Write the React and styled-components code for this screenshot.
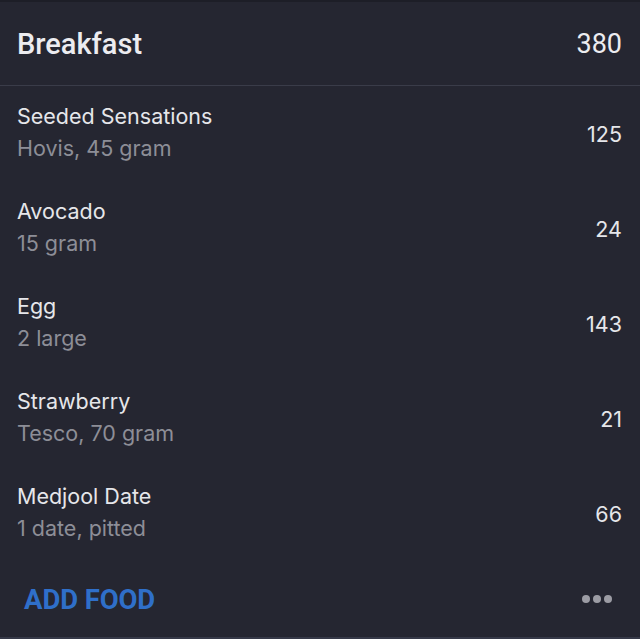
import styled, { createGlobalStyle } from 'styled-components';

const GlobalStyle = createGlobalStyle`
  html, body {
    margin: 0;
    padding: 0;
    background: #252631;
  }
`;

const items = [
  { name: 'Seeded Sensations', detail: 'Hovis, 45 gram', kcal: 125 },
  { name: 'Avocado', detail: '15 gram', kcal: 24 },
  { name: 'Egg', detail: '2 large', kcal: 143 },
  { name: 'Strawberry', detail: 'Tesco, 70 gram', kcal: 21 },
  { name: 'Medjool Date', detail: '1 date, pitted', kcal: 66 },
];

export default function App() {
  return (
    <>
      <GlobalStyle />
      <SCard>
        <SHeader>
          <STitle>Breakfast</STitle>
          <STotal>380</STotal>
        </SHeader>
        <SList>
          {items.map((item) => (
            <SRow key={item.name}>
              <SInfo>
                <SName>{item.name}</SName>
                <SDetail>{item.detail}</SDetail>
              </SInfo>
              <SKcal>{item.kcal}</SKcal>
            </SRow>
          ))}
        </SList>
        <SFooter>
          <SAddButton>ADD FOOD</SAddButton>
          <SMore aria-label="more">
            <SDot />
            <SDot />
            <SDot />
          </SMore>
        </SFooter>
      </SCard>
    </>
  );
}

const SCard = styled.div`
  width: 640px;
  height: 639px;
  background: #252631;
  border-top: 2px solid #1d1e27;
  border-bottom: 2px solid #363948;
  box-sizing: border-box;
  display: flex;
  flex-direction: column;
`;

const SHeader = styled.div`
  height: 83px;
  display: flex;
  align-items: center;
  justify-content: space-between;
  padding: 0 18px 0 17px;
  border-bottom: 1px solid #3a3c49;
`;

const STitle = styled.h1`
  margin: 0;
  font-family: Roboto, 'Liberation Sans', sans-serif;
  font-size: 29px;
  font-weight: 500;
  color: #ececf0;
`;

const STotal = styled.span`
  font-family: Roboto, 'Liberation Sans', sans-serif;
  font-size: 27px;
  color: #ececf0;
`;

const SList = styled.div`
  display: flex;
  flex-direction: column;
`;

const SRow = styled.div`
  height: 95px;
  display: flex;
  align-items: center;
  justify-content: space-between;
  padding: 0 18px 3px 17px;
  box-sizing: border-box;
`;

const SInfo = styled.div`
  display: flex;
  flex-direction: column;
  gap: 8px;
  font-family: Inter, 'Liberation Sans', sans-serif;
`;

const SName = styled.span`
  font-size: 21.5px;
  line-height: 24px;
  color: #e6e6ea;
`;

const SDetail = styled.span`
  font-size: 21.5px;
  line-height: 24px;
  color: #8d8e97;
`;

const SKcal = styled.span`
  font-family: Inter, 'Liberation Sans', sans-serif;
  font-size: 21.5px;
  color: #e6e6ea;
  margin-top: 4px;
`;

const SFooter = styled.div`
  flex: 1;
  display: flex;
  align-items: center;
  justify-content: space-between;
  padding: 0 28px 0 24px;
`;

const SAddButton = styled.button`
  background: none;
  border: none;
  padding: 0;
  font-family: Roboto, 'Liberation Sans', sans-serif;
  font-size: 27.5px;
  font-weight: 700;
  letter-spacing: -0.1px;
  color: #2f6fc9;
  cursor: pointer;
`;

const SMore = styled.div`
  display: flex;
  gap: 3px;
`;

const SDot = styled.span`
  width: 8px;
  height: 8px;
  border-radius: 50%;
  background: #9c9ca4;
`;
